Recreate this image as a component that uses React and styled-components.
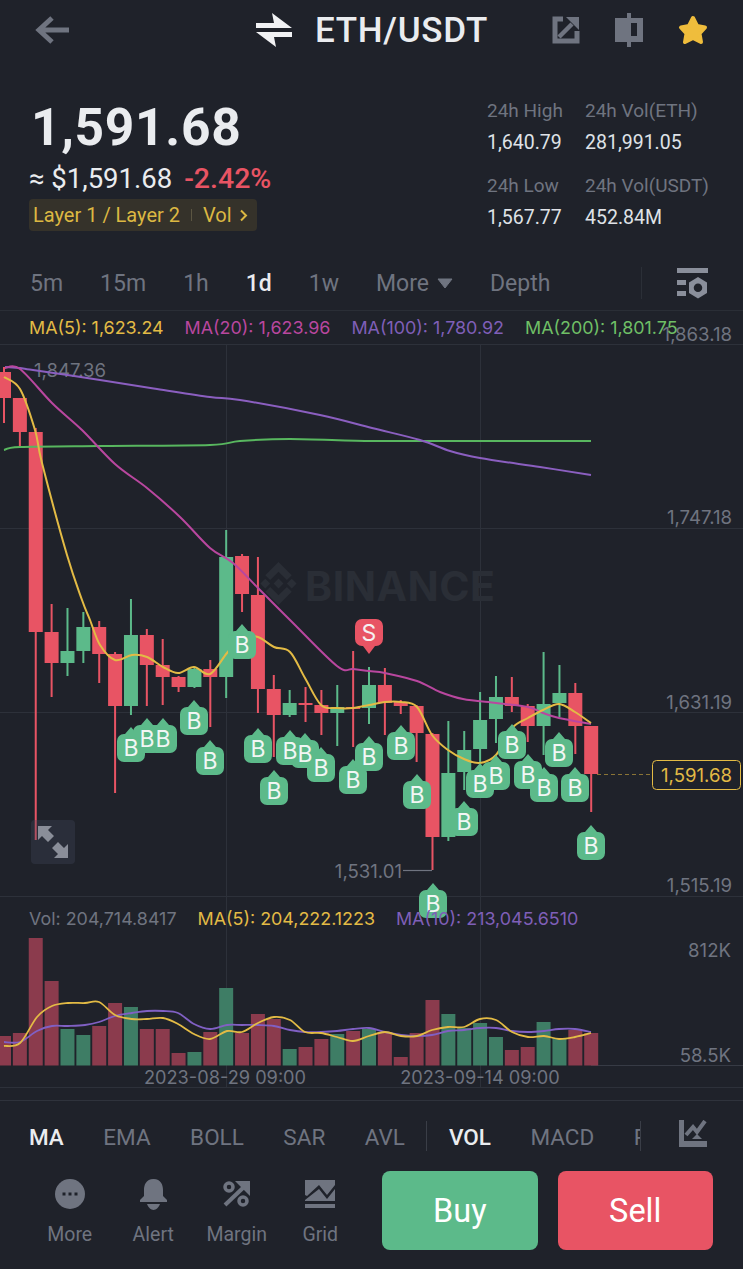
import React from 'react';
import styled, { createGlobalStyle } from 'styled-components';

const BG = '#1f222a';
const GRAY = '#6f7480';
const GOLD = '#e3bb45';
const PINK = '#b9479f';
const PURPLE = '#7f5fb8';
const RED = '#e85464';
const GREEN = '#5cba8a';

const Global = createGlobalStyle`
  html, body { margin: 0; padding: 0; background: ${BG}; }
  * { box-sizing: border-box; }
`;

const Page = styled.div`
  width: 743px;
  height: 1269px;
  overflow: hidden;
  background: ${BG};
  font-family: Roboto, "Noto Sans", sans-serif;
  color: #eaecef;
`;

const Header = styled.header`
  height: 60px;
  display: flex;
  align-items: center;
  padding: 0 35px;
`;
const Pair = styled.div`
  display: flex;
  align-items: center;
  gap: 23px;
  margin-left: 186px;
`;
const Title = styled.div`
  font-size: 35px;
  font-weight: 500;
  letter-spacing: 0.7px;
`;
const HeaderIcons = styled.div`
  display: flex;
  align-items: center;
  gap: 35px;
  margin-left: auto;
`;

const Summary = styled.section`
  height: 190px;
  display: flex;
  justify-content: space-between;
  padding: 37px 0 0 29px;
`;
const PriceCol = styled.div`
  display: flex;
  flex-direction: column;
  align-items: flex-start;
`;
const BigPrice = styled.div`
  font-size: 51.5px;
  line-height: 62px;
  font-weight: 700;
  letter-spacing: 0.7px;
  margin-left: 2px;
`;
const SubPrice = styled.div`
  display: flex;
  gap: 12px;
  font-size: 27.5px;
  line-height: 32px;
  margin-top: 4px;
`;
const Change = styled.span`
  color: ${RED};
  font-size: 28.5px;
  font-weight: 500;
`;
const Tag = styled.div`
  display: flex;
  align-items: center;
  height: 32px;
  margin-top: 4px;
  padding: 0 9px 0 4px;
  background: #35322a;
  border-radius: 4px;
  color: #dcb842;
  font-size: 20px;
  white-space: nowrap;
`;
const TagRule = styled.span`
  width: 1px;
  height: 12px;
  margin: 0 11px;
  background: #5c5642;
`;
const TagChevron = styled.svg`
  margin-left: 7px;
`;
const Stats = styled.div`
  display: grid;
  grid-template-columns: 98px 158px;
  grid-template-rows: 32px 32px 43px 32px;
  align-items: end;
  margin-top: -2px;
  line-height: 32px;
`;
const StatLabel = styled.div`
  font-size: 19px;
  color: ${GRAY};
`;
const StatValue = styled.div`
  font-size: 19.5px;
  color: #dfe2e7;
`;

const TabBar = styled.nav`
  height: 61px;
  display: flex;
  align-items: center;
  gap: 37px;
  padding: 6px 35px 0 30px;
  border-bottom: 1px solid #2a2e36;
`;
const Tab = styled.span`
  font-size: 23px;
  color: ${(p) => (p.$active ? '#eaecef' : GRAY)};
  font-weight: ${(p) => (p.$active ? 500 : 400)};
  display: flex;
  align-items: center;
  gap: 8px;
`;
const TabTools = styled.div`
  margin-left: auto;
  height: 32px;
  display: flex;
  align-items: center;
  border-left: 1px solid #2b2f37;
  padding-left: 35px;
`;

const Chart = styled.div`
  position: relative;
  height: 790px;
  border-bottom: 1px solid #2f333c;
`;
const ChartSvg = styled.svg`
  display: block;
  position: absolute;
  inset: 0;
  font-family: Inter, Roboto, sans-serif;
`;
const Legend = styled.div`
  position: absolute;
  left: ${(p) => p.$left}px;
  top: ${(p) => p.$top}px;
  display: flex;
  gap: ${(p) => p.$gap}px;
  font-family: Inter, Roboto, sans-serif;
  font-size: 17.9px;
  line-height: 20px;
  white-space: nowrap;
`;
const LegendItem = styled.span`
  color: ${(p) => p.$color};
`;
const ExpandButton = styled.div`
  position: absolute;
  left: 31px;
  top: 509px;
  width: 44px;
  height: 44px;
  border-radius: 4px;
  background: rgba(68, 74, 92, 0.33);
  display: flex;
  align-items: center;
  justify-content: center;
`;

const IndicatorBar = styled.div`
  height: 70px;
  display: flex;
  align-items: center;
  padding: 0 36px 0 29px;
`;
const IndicatorScroll = styled.div`
  width: 613px;
  height: 30px;
  display: flex;
  align-items: center;
  gap: 39.5px;
  overflow: hidden;
  border-right: 1px solid #3a3e47;
  margin-right: 38px;
`;
const Indicator = styled.span`
  font-size: 22.5px;
  line-height: 32px;
  padding-top: 1px;
  font-weight: ${(p) => (p.$active ? 500 : 400)};
  color: ${(p) => (p.$active ? '#eaecef' : GRAY)};
  flex: none;
`;
const IndicatorRule = styled.span`
  width: 1px;
  height: 30px;
  background: #3a3e47;
  margin: 0 -18px;
  flex: none;
`;
const IndicatorTool = styled.div`
  display: flex;
  margin-bottom: 6px;
`;

const ActionBar = styled.div`
  display: flex;
  align-items: flex-start;
  padding: 0 30px 0 28px;
`;
const ActionTools = styled.div`
  display: grid;
  grid-template-columns: repeat(4, 83.5px);
  margin-top: 7px;
  margin-right: 20px;
`;
const Tool = styled.div`
  display: flex;
  flex-direction: column;
  align-items: center;
  gap: 13px;
  font-size: 19.5px;
  color: ${GRAY};
`;
const IconSlot = styled.div`
  height: 32px;
  display: flex;
  align-items: center;
`;
const TradeButton = styled.div`
  width: 156px;
  height: 79px;
  border-radius: 8px;
  margin-left: ${(p) => p.$gap || 0}px;
  background: ${(p) => p.$bg};
  color: #fff;
  font-size: 32.5px;
  display: flex;
  align-items: center;
  justify-content: center;
`;

/* [bodyTop, bodyBottom, wickTop, wickBottom, green] in page pixels */
const candles = [
  [372, 398, 367, 423, 0], [398, 432, 398, 447, 0], [432, 632, 428, 840, 0], [632, 663, 604, 697, 0],
  [651, 663, 608, 676, 1], [627, 651, 612, 663, 1], [627, 654, 621, 683, 0], [654, 706, 652, 793, 0],
  [635, 706, 599, 715, 1], [635, 665, 629, 706, 0], [665, 677, 639, 705, 0], [677, 687, 676, 692, 0],
  [669, 687, 667, 688, 1], [669, 677, 660, 727, 0], [557, 677, 530, 698, 1], [556, 594, 554, 612, 0],
  [595, 689, 557, 713, 0], [689, 715, 675, 757, 0], [703, 715, 690, 717, 1], [703, 705, 687, 722, 0],
  [705, 713, 690, 735, 0], [707, 713, 685, 746, 1], [707, 709, 651, 747, 0], [685, 708, 667, 724, 1],
  [685, 703, 668, 735, 0], [702, 706, 700, 714, 0], [706, 733, 705, 762, 0], [734, 837, 733, 870, 0],
  [773, 837, 721, 841, 1], [750, 772, 731, 790, 1], [720, 749, 692, 763, 1], [697, 719, 676, 743, 1],
  [697, 706, 677, 712, 0], [706, 726, 704, 742, 0], [704, 726, 652, 755, 1], [693, 703, 665, 717, 1],
  [693, 726, 683, 754, 0], [726, 774, 726, 812, 0],
];
const volumeTops = [
  1036, 1033, 938, 981, 1029, 1035, 1026, 1003, 1007, 1029, 1029, 1053, 1052, 1032, 988, 1033, 1014, 1019, 1049,
  1047, 1039, 1034, 1031, 1029, 1032, 1057, 1033, 1000, 1014, 1028, 1023, 1037, 1050, 1047, 1022, 1038, 1030, 1033,
];
const candleX = (i) => 4 + 15.87 * i;

const lines = {
  ma5: '4,377 20,389 35,430 42,463 67,555 82,600 90,620 100,645 115,660 132,655 147,657 163,667 178,673 194,667 210,674 227,653 242,637 258,637 274,647 290,652 305,678 321,705 337,708 353,708 369,705 385,702 401,702 417,707 432,735 448,750 464,759 480,763 496,755 512,728 528,718 543,710 559,704 575,712 591,723',
  ma20: '5,368 20,369 52,403 82,430 115,464 147,488 180,517 210,548 233,563 258,588 290,620 337,666 353,669 369,671 385,673 417,681 440,692 463,699 496,703 528,707 543,713 559,718 591,724',
  ma100: '5,367 20,368 33,370 100,380 157,389 210,397 240,400 320,415 372,428 420,440 450,451 480,458 540,467 591,475',
  ma200: '4,450 20,447 100,446 210,445 240,441 290,439 372,441 450,441 591,441',
  vol5: '4,1046 20,1043 37,1017 52,1006 68,1003 85,1003 99,1002 115,1015 132,1019 147,1019 163,1018 178,1024 194,1034 210,1039 227,1031 242,1032 258,1023 274,1017 290,1020 305,1032 321,1033 337,1037 353,1041 369,1036 385,1032 401,1036 417,1036 432,1030 448,1027 464,1027 480,1019 496,1020 512,1032 528,1037 544,1036 559,1039 575,1037 591,1033',
  vol10: '4,1042 20,1042 37,1031 52,1026 68,1026 85,1025 99,1022 115,1016 132,1013 147,1011 163,1011 178,1013 194,1024 210,1029 227,1025 242,1025 258,1025 274,1026 290,1030 305,1032 321,1032 337,1031 353,1029 369,1028 385,1032 401,1035 417,1036 432,1035 448,1031 464,1030 480,1028 496,1028 512,1031 528,1032 544,1031 559,1029 575,1029 591,1032',
};

// catmull-rom through the points, so the averages don't look like polylines
const smooth = (str) => {
  const p = str.split(' ').map((s) => s.split(',').map(Number));
  let d = `M${p[0][0]} ${p[0][1]}`;
  for (let i = 0; i < p.length - 1; i++) {
    const a = p[Math.max(i - 1, 0)];
    const b = p[i];
    const c = p[i + 1];
    const e = p[Math.min(i + 2, p.length - 1)];
    const c1x = b[0] + (c[0] - a[0]) / 6;
    const c1y = b[1] + (c[1] - a[1]) / 6;
    const c2x = c[0] - (e[0] - b[0]) / 6;
    const c2y = c[1] - (e[1] - b[1]) / 6;
    d += `C${c1x.toFixed(1)} ${c1y.toFixed(1)} ${c2x.toFixed(1)} ${c2y.toFixed(1)} ${c[0]} ${c[1]}`;
  }
  return d;
};

const buyMarks = [
  [131, 748], [147, 739], [163, 739], [194, 721], [210, 761], [242, 645], [258, 749], [274, 791], [290, 751],
  [305, 754], [321, 768], [353, 780], [369, 757], [401, 746], [417, 795], [433, 904], [464, 822], [496, 776],
  [480, 784], [512, 745], [528, 775], [544, 788], [559, 753], [575, 788], [591, 846],
];

const AxisText = ({ x, y, anchor = 'end', size = 18.6, color = GRAY, children }) => (
  <text x={x} y={y} fontSize={size} fill={color} textAnchor={anchor}>{children}</text>
);

const PriceChart = () => (
  <ChartSvg width="743" height="790" viewBox="0 311 743 790">
    {/* grid */}
    <g stroke="#2d313a" strokeWidth="1">
      <path d="M0 344.5H743M0 528.5H743M0 712.5H743M0 896.5H743M0 1087.5H743" />
      <path d="M226.5 344V1087M480.5 344V1087" />
      <path d="M591 1065.5H743" stroke="#373b45" />
    </g>

    {/* watermark */}
    <g fill="#2a2e36">
      <path
        transform="translate(257 562) scale(0.34)"
        d="M38.73 53.2l24.59-24.58 24.6 24.6 14.3-14.31L63.32 0l-38.9 38.9zM10 63.31L24.3 49 38.6 63.3 24.3 77.61zm28.73 10.1l24.59 24.58 24.6-24.6 14.31 14.29-38.9 38.91-38.91-38.88v-.02zm49.06-10.1l14.3-14.31 14.3 14.3-14.3 14.3zM77.83 63.3L63.32 48.78 52.59 59.51l-1.24 1.23-2.54 2.54 14.51 14.5 14.51-14.47z"
      />
      <text x="305" y="601" fontSize="41" fontWeight="700" fontFamily="Inter, sans-serif" letterSpacing="0.5">BINANCE</text>
    </g>

    {/* candles */}
    {candles.map(([top, bottom, wickTop, wickBottom, up], i) => {
      const x = candleX(i);
      const fill = up ? GREEN : RED;
      return (
        <g key={i} fill={fill}>
          <rect x={x - 1} y={wickTop} width="2" height={wickBottom - wickTop} />
          <rect x={x - 7} y={top} width="14" height={bottom - top} />
        </g>
      );
    })}

    {/* high / low callouts */}
    <AxisText x={34} y={377} anchor="start">1,847.36</AxisText>
    <AxisText x={402} y={878}>1,531.01</AxisText>
    <path d="M403 870.5H432" stroke={GRAY} strokeWidth="1.2" />

    {/* moving averages */}
    <g fill="none" strokeWidth="2" strokeLinejoin="round">
      <path d={smooth(lines.ma200)} stroke="#58b75f" />
      <path d={smooth(lines.ma100)} stroke="#8b5fc0" />
      <path d={smooth(lines.ma20)} stroke={PINK} />
      <path d={smooth(lines.ma5)} stroke={GOLD} />
    </g>

    {/* trade marks: shapes first, letters stay readable on top of them */}
    <path d="M362 619 H376 a7 7 0 0 1 7 7 V639 a7 7 0 0 1 -7 7 H375 L369 654 L363 646 H362 a7 7 0 0 1 -7 -7 V626 a7 7 0 0 1 7 -7 Z" fill={RED} />
    <text x="369" y="641" fontSize="23" fill="#f5f0f1" textAnchor="middle">S</text>
    {buyMarks.map(([x, y]) => (
      <path
        key={x}
        d={`M${x - 6} ${y - 14} L${x} ${y - 21} L${x + 6} ${y - 14} H${x + 7} a7 7 0 0 1 7 7 V${y + 7} a7 7 0 0 1 -7 7 H${x - 7} a7 7 0 0 1 -7 -7 V${y - 7} a7 7 0 0 1 7 -7 Z`}
        fill={GREEN}
      />
    ))}
    {buyMarks.map(([x, y]) => (
      <text key={x} x={x} y={y + 8} fontSize="23" fill="#f2f6f4" textAnchor="middle">B</text>
    ))}

    {/* price axis */}
    <AxisText x={732} y={341}>1,863.18</AxisText>
    <AxisText x={732} y={524}>1,747.18</AxisText>
    <AxisText x={732} y={709}>1,631.19</AxisText>
    <AxisText x={732} y={892}>1,515.19</AxisText>

    {/* last price */}
    <path d="M597 774.5H652" stroke="#8a7436" strokeWidth="1.2" strokeDasharray="4 3" />
    <rect x="652.5" y="760.5" width="88" height="29" rx="4" fill={BG} stroke={GOLD} strokeWidth="1" />
    <AxisText x={696.5} y={782} anchor="middle" color={GOLD}>1,591.68</AxisText>

    {/* volume */}
    {volumeTops.map((top, i) => (
      <rect
        key={i}
        x={candleX(i) - 7}
        y={top}
        width="14"
        height={1065.5 - top}
        fill={candles[i][4] ? '#3e7d65' : '#8b3b4d'}
      />
    ))}
    <g fill="none" strokeWidth="1.8" strokeLinejoin="round">
      <path d={smooth(lines.vol10)} stroke="#8060c4" />
      <path d={smooth(lines.vol5)} stroke={GOLD} />
    </g>
    <AxisText x={731} y={957}>812K</AxisText>
    <AxisText x={731} y={1062}>58.5K</AxisText>
    <AxisText x={225} y={1084} anchor="middle" size={18.2}>2023-08-29 09:00</AxisText>
    <AxisText x={480} y={1084} anchor="middle" size={18.2}>2023-09-14 09:00</AxisText>
  </ChartSvg>
);

const BackIcon = () => (
  <svg width="35" height="30" viewBox="0 0 35 30">
    <path d="M34 15H5M17 3L4 15L17 27" fill="none" stroke={GRAY} strokeWidth="5" />
  </svg>
);
const SwapIcon = () => (
  <svg width="36" height="34" viewBox="0 0 36 34">
    <path d="M0 10H18L16 0L36 15H0Z" fill="#f1f2f4" />
    <path d="M36 24H18L20 34L0 19H36Z" fill="#f1f2f4" />
  </svg>
);
const ShareIcon = () => (
  <svg width="28" height="28" viewBox="0 0 28 28">
    <path d="M11 3H3V25H25V15" fill="none" stroke={GRAY} strokeWidth="5" />
    <path d="M7 21L20 8" fill="none" stroke={GRAY} strokeWidth="4.5" />
    <path d="M14 1H27V14Z" fill={GRAY} />
  </svg>
);
const CandleIcon = () => (
  <svg width="28" height="34" viewBox="0 0 28 34">
    <path fillRule="evenodd" d="M12 0H16V5H28V29H16V34H12V29H0V5H12ZM16 10V23H22V10Z" fill={GRAY} />
  </svg>
);
const StarIcon = () => (
  <svg width="30" height="31" viewBox="0 0 30 31">
    <path d="M15 3L19 11L27 12.500L21.500 18.500L23 27L15 23L7 27L8.500 18.500L3 12.500L11 11Z" fill="#efbd3c" stroke="#efbd3c" strokeWidth="4" strokeLinejoin="round" />
  </svg>
);
const SettingsIcon = () => (
  <svg width="31" height="31" viewBox="0 0 31 31">
    <path d="M0 0H31V5H0ZM0 12H9V17H0ZM0 23H9V28H0Z" fill="#8a8f9b" />
    <path fillRule="evenodd" d="M21 9L30 14.500V25L21 30.500L12 25V14.500ZM21 15.500A4.200 4.200 0 1 0 21 24A4.200 4.200 0 1 0 21 15.500Z" fill="#8a8f9b" />
  </svg>
);
const ExpandIcon = () => (
  <svg width="32" height="32" viewBox="0 0 32 32">
    <path d="M1 0H15L11 4L17 10L11 16L5 10L1 14Z" fill="#8a8e99" />
    <path d="M31 32H17L21 28L15 22L21 16L27 22L31 18Z" fill="#8a8e99" />
  </svg>
);
const IndicatorIcon = () => (
  <svg width="28" height="27" viewBox="0 0 28 27">
    <path d="M0 0H5V21H28V27H0Z" fill={GRAY} />
    <path d="M7 15L14 7L18 12L26 1" fill="none" stroke={GRAY} strokeWidth="4" />
    <path d="M13 19L18 14L23 19Z" fill={GRAY} />
  </svg>
);
const MoreIcon = () => (
  <svg width="30" height="30" viewBox="0 0 30 30">
    <circle cx="15" cy="15" r="15" fill={GRAY} />
    <path d="M7.500 13.500h3v3h-3zM13.500 13.500h3v3h-3zM19.500 13.500h3v3h-3z" fill={BG} />
  </svg>
);
const BellIcon = () => (
  <svg width="27" height="31" viewBox="0 0 27 31">
    <path d="M13.500 0C6 0 4 6 4 11V17L0 21V23H27V21L23 17V11C23 6 21 0 13.500 0Z" fill={GRAY} />
    <path d="M7 25H20C19 28 16 31 13.500 31C11 31 8 28 7 25Z" fill={GRAY} />
  </svg>
);
const MarginIcon = () => (
  <svg width="27" height="26" viewBox="0 0 27 26">
    <path d="M2 24L22 5" fill="none" stroke={GRAY} strokeWidth="4" />
    <path d="M12 0H27V15Z" fill={GRAY} />
    <circle cx="6" cy="6" r="4" fill="none" stroke={GRAY} strokeWidth="3.500" />
    <circle cx="20" cy="20" r="4" fill="none" stroke={GRAY} strokeWidth="3.500" />
  </svg>
);
const GridIcon = () => (
  <svg width="30" height="28" viewBox="0 0 30 28">
    <path d="M0 0H30V5L22 15L14 5L2 16L0 15ZM0 20L14 9L22 19L30 9V21H0Z" fill={GRAY} />
    <path d="M0 24H30V28H0Z" fill={GRAY} />
  </svg>
);

const tools = [
  ['More', <MoreIcon key="m" />],
  ['Alert', <BellIcon key="a" />],
  ['Margin', <MarginIcon key="g" />],
  ['Grid', <GridIcon key="r" />],
];

export default function App() {
  return (
    <Page>
      <Global />
      <Header>
        <BackIcon />
        <Pair>
          <SwapIcon />
          <Title>ETH/USDT</Title>
        </Pair>
        <HeaderIcons>
          <ShareIcon />
          <CandleIcon />
          <StarIcon />
        </HeaderIcons>
      </Header>

      <Summary>
        <PriceCol>
          <BigPrice>1,591.68</BigPrice>
          <SubPrice>
            <span>≈ $1,591.68</span>
            <Change>-2.42%</Change>
          </SubPrice>
          <Tag>
            Layer 1 / Layer 2<TagRule />Vol
            <TagChevron width="9" height="13" viewBox="0 0 9 13">
              <path d="M2 1.500L7 6.500L2 11.500" fill="none" stroke="#dcb842" strokeWidth="2" />
            </TagChevron>
          </Tag>
        </PriceCol>
        <Stats>
          <StatLabel>24h High</StatLabel>
          <StatLabel>24h Vol(ETH)</StatLabel>
          <StatValue>1,640.79</StatValue>
          <StatValue>281,991.05</StatValue>
          <StatLabel>24h Low</StatLabel>
          <StatLabel>24h Vol(USDT)</StatLabel>
          <StatValue>1,567.77</StatValue>
          <StatValue>452.84M</StatValue>
        </Stats>
      </Summary>

      <TabBar>
        <Tab>5m</Tab>
        <Tab>15m</Tab>
        <Tab>1h</Tab>
        <Tab $active>1d</Tab>
        <Tab>1w</Tab>
        <Tab>
          More
          <svg width="16" height="11" viewBox="0 0 16 11"><path d="M1 1H15L8 10Z" fill={GRAY} stroke={GRAY} strokeLinejoin="round" /></svg>
        </Tab>
        <Tab>Depth</Tab>
        <TabTools>
          <SettingsIcon />
        </TabTools>
      </TabBar>

      <Chart>
        <PriceChart />
        <Legend $left={29} $top={7} $gap={21}>
          <LegendItem $color={GOLD}>MA(5): 1,623.24</LegendItem>
          <LegendItem $color={PINK}>MA(20): 1,623.96</LegendItem>
          <LegendItem $color={PURPLE}>MA(100): 1,780.92</LegendItem>
          <LegendItem $color="#6fbf66">MA(200): 1,801.75</LegendItem>
        </Legend>
        <Legend $left={29} $top={598} $gap={21}>
          <LegendItem $color={GRAY}>Vol: 204,714.8417</LegendItem>
          <LegendItem $color={GOLD}>MA(5): 204,222.1223</LegendItem>
          <LegendItem $color={PURPLE}>MA(10): 213,045.6510</LegendItem>
        </Legend>
        <ExpandButton>
          <ExpandIcon />
        </ExpandButton>
      </Chart>

      <IndicatorBar>
        <IndicatorScroll>
          <Indicator $active>MA</Indicator>
          <Indicator>EMA</Indicator>
          <Indicator>BOLL</Indicator>
          <Indicator>SAR</Indicator>
          <Indicator>AVL</Indicator>
          <IndicatorRule />
          <Indicator $active>VOL</Indicator>
          <Indicator>MACD</Indicator>
          <Indicator>RSI</Indicator>
        </IndicatorScroll>
        <IndicatorTool>
          <IndicatorIcon />
        </IndicatorTool>
      </IndicatorBar>

      <ActionBar>
        <ActionTools>
          {tools.map(([label, icon]) => (
            <Tool key={label}>
              <IconSlot>{icon}</IconSlot>
              {label}
            </Tool>
          ))}
        </ActionTools>
        <TradeButton $bg={GREEN}>Buy</TradeButton>
        <TradeButton $bg={RED} $gap={20}>Sell</TradeButton>
      </ActionBar>
    </Page>
  );
}
